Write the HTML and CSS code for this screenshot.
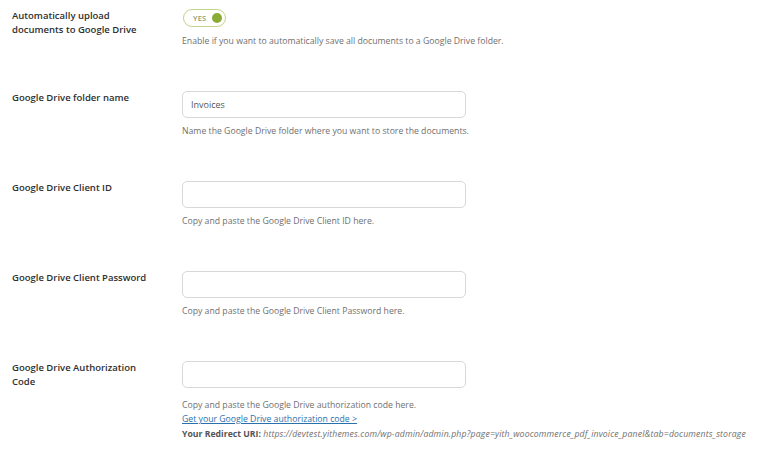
FILE: index.html
```html
<!DOCTYPE html>
<html lang="en">
<head>
<meta charset="utf-8">
<title>Google Drive settings</title>
<link rel="stylesheet" href="styles.css">
</head>
<body>
<div class="form">
  <div class="row">
    <div class="label">Automatically upload documents to Google Drive</div>
    <div class="field">
      <div class="toggle"><span class="toggle-text">YES</span><span class="knob"></span></div>
      <p class="desc">Enable if you want to automatically save all documents to a Google Drive folder.</p>
    </div>
  </div>
  <div class="row">
    <div class="label">Google Drive folder name</div>
    <div class="field">
      <input class="input" type="text" value="Invoices">
      <p class="desc">Name the Google Drive folder where you want to store the documents.</p>
    </div>
  </div>
  <div class="row">
    <div class="label">Google Drive Client ID</div>
    <div class="field">
      <input class="input" type="text" value="">
      <p class="desc">Copy and paste the Google Drive Client ID here.</p>
    </div>
  </div>
  <div class="row">
    <div class="label">Google Drive Client Password</div>
    <div class="field">
      <input class="input" type="text" value="">
      <p class="desc">Copy and paste the Google Drive Client Password here.</p>
    </div>
  </div>
  <div class="row row-last">
    <div class="label">Google Drive Authorization Code</div>
    <div class="field">
      <input class="input" type="text" value="">
      <p class="desc desc-last">Copy and paste the Google Drive authorization code here.<br>
        <a class="link" href="#">Get your Google Drive authorization code &gt;</a><br>
        <b class="strong">Your Redirect URI:</b> <i class="uri">https://devtest.yithemes.com/wp-admin/admin.php?page=yith_woocommerce_pdf_invoice_panel&amp;tab=documents_storage</i>
      </p>
    </div>
  </div>
</div>
</body>
</html>
```

FILE: styles.css
```css
html, body {
  margin: 0;
  padding: 0;
  background: #ffffff;
}

body {
  font-family: "Open Sans", "Liberation Sans", sans-serif;
  color: #333333;
}

.form {
  padding-left: 12px;
}

.row {
  display: flex;
  padding: 9px 0 33.5px;
}

.row-last {
  padding-bottom: 0;
}

.label {
  width: 140px;
  margin-right: 30px;
  font-size: 9.5px;
  font-weight: 600;
  line-height: 14px;
  color: #2f2f2f;
}

.field {
  display: flex;
  flex-direction: column;
  align-items: flex-start;
}

.toggle {
  box-sizing: border-box;
  width: 43px;
  height: 18px;
  margin: 0 0 1px 1px;
  border: 1px solid #c2d38a;
  border-radius: 9px;
  display: flex;
  align-items: center;
  padding: 0 3px 0 9px;
  justify-content: space-between;
}

.toggle-text {
  font-size: 7.5px;
  font-weight: 600;
  color: #8f9b6a;
  letter-spacing: 0.2px;
}

.knob {
  width: 10px;
  height: 10px;
  border-radius: 50%;
  background: #8aac35;
}

.input {
  box-sizing: border-box;
  width: 284px;
  height: 27px;
  margin: 0;
  padding: 0 8px;
  border: 1px solid #d8d8d8;
  border-radius: 5px;
  background: #ffffff;
  font-family: "Open Sans", "Liberation Sans", sans-serif;
  font-size: 9px;
  color: #555555;
  outline: none;
}

.desc {
  margin: 6px 0 0;
  font-size: 8.7px;
  line-height: 14.5px;
  color: #6f6f6f;
  white-space: nowrap;
}

.desc-last {
  margin-top: 9.5px;
}

.link {
  color: #2a70ad;
  text-decoration: underline;
}

.strong {
  font-weight: 700;
  color: #555555;
}

.uri {
  letter-spacing: 0.15px;
}
```
